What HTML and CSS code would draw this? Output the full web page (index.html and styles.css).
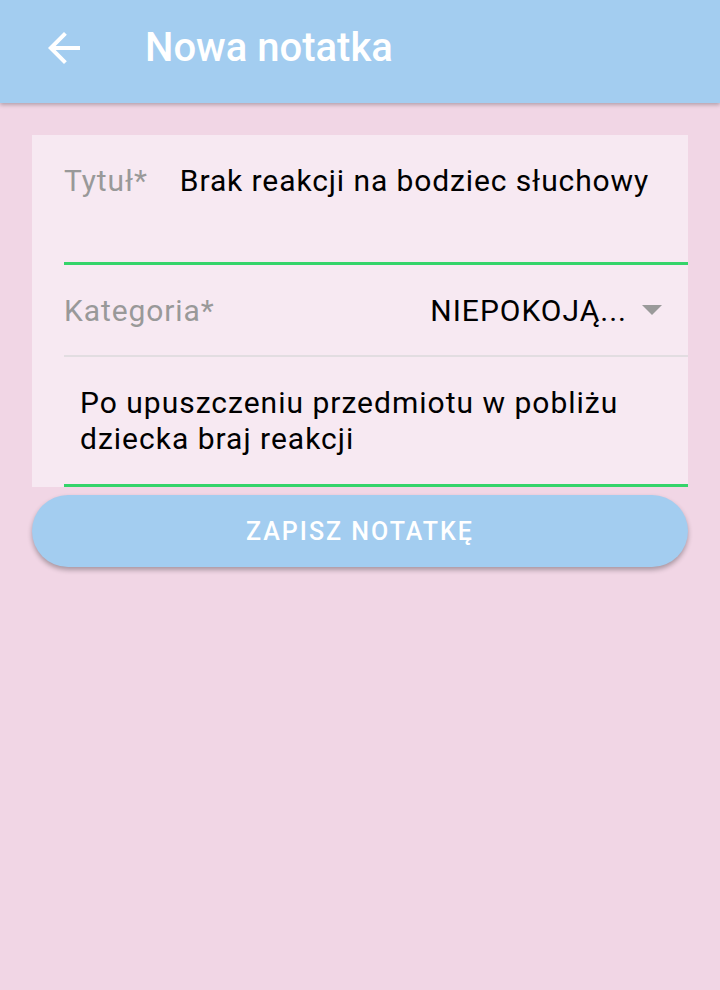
FILE: index.html
```html
<!DOCTYPE html>
<html lang="pl">
<head>
<meta charset="utf-8">
<link rel="stylesheet" href="styles.css">
</head>
<body>
<header class="appbar">
  <span class="back">
    <svg viewBox="0 0 24 24" width="48" height="48"><path d="M20 11H7.83l5.59-5.59L12 4l-8 8 8 8 1.41-1.41L7.83 13H20v-2z" fill="#fff"/></svg>
  </span>
  <h1 class="title">Nowa notatka</h1>
</header>
<main class="content">
  <section class="card">
    <div class="field field-title">
      <span class="label">Tytuł*</span>
      <span class="value">Brak reakcji na bodziec słuchowy</span>
    </div>
    <div class="field field-cat">
      <span class="label">Kategoria*</span>
      <span class="select">NIEPOKOJĄ...<span class="caret"></span></span>
    </div>
    <div class="field field-desc">
      <p class="desc">Po upuszczeniu przedmiotu w pobliżu dziecka braj reakcji</p>
    </div>
  </section>
  <button class="save">ZAPISZ NOTATKĘ</button>
</main>
</body>
</html>
```
FILE: styles.css
```css
* { box-sizing: border-box; }
html, body { margin: 0; padding: 0; }
body {
  width: 720px;
  height: 990px;
  background: #f1d6e5;
  font-family: Roboto, "Noto Sans", sans-serif;
  overflow: hidden;
}
.appbar {
  height: 103px;
  background: #a3cdf0;
  display: flex;
  align-items: center;
  padding-left: 40px;
  box-shadow: 0 2px 4px rgba(0,0,0,0.25);
  position: relative;
  z-index: 1;
}
.back { display: flex; width: 48px; height: 48px; margin-top: -8px; }
.title {
  margin: -8px 0 0 57px;
  font-size: 40px;
  font-weight: 500;
  color: #fff;
}
.content { padding: 32px 32px 0; }
.card {
  background: #f7e9f2;
  padding-left: 32px;
}
.field { display: flex; }
.label { color: #999; font-size: 30px; letter-spacing: 0.9px; }
.field-title {
  height: 130px;
  padding-top: 28px;
  border-bottom: 3px solid #34d46a;
}
.value { color: #000; font-size: 30px; letter-spacing: 0.9px; margin-left: 32px; }
.field-cat {
  height: 92px;
  align-items: center;
  justify-content: space-between;
  border-bottom: 2px solid #e2dde1;
  padding-right: 26px;
}
.select {
  font-size: 30px;
  letter-spacing: 1px;
  color: #000;
  display: flex;
  align-items: center;
}
.caret {
  width: 0; height: 0;
  border-left: 10px solid transparent;
  border-right: 10px solid transparent;
  border-top: 10px solid #9a9a9a;
  margin-left: 15px;
}
.field-desc {
  height: 130px;
  border-bottom: 3px solid #34d46a;
  padding: 28px 0 0 16px;
}
.desc {
  margin: 0;
  font-size: 30px;
  letter-spacing: 1px;
  line-height: 36px;
  color: #000;
}
.save {
  display: block;
  width: 100%;
  height: 72px;
  margin-top: 8px;
  border: none;
  border-radius: 36px;
  background: #a3cdf0;
  color: #fff;
  font-family: Roboto, sans-serif;
  font-size: 25px;
  font-weight: 500;
  letter-spacing: 2px;
  box-shadow: 0 3px 5px rgba(0,0,0,0.3);
}
```
